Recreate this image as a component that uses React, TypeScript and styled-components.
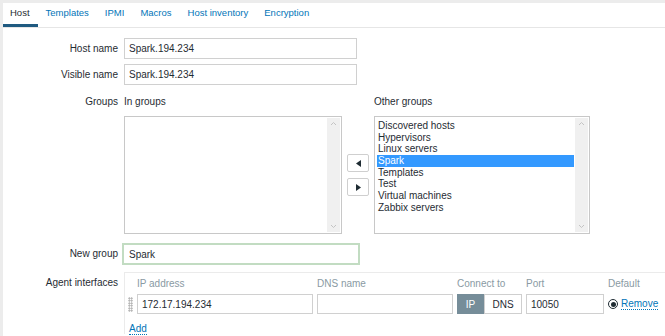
import React from "react";
import styled, { createGlobalStyle } from "styled-components";

const GlobalStyle = createGlobalStyle`
  html, body { margin: 0; padding: 0; }
  body {
    background: #ececec;
    font-family: "Liberation Sans", Arial, sans-serif;
    font-size: 10px;
    color: #1f2c33;
    overflow: hidden;
  }
`;

const Panel = styled.div`
  margin: 3px 0 0 3px;
  background: #fff;
  height: 333px;
  overflow: hidden;
`;

const TabBar = styled.div`
  display: flex;
  height: 24px;
  border-bottom: 1px solid #e6e6e6;
`;

const Tab = styled.a<{ $active?: boolean }>`
  box-sizing: border-box;
  height: 24px;
  padding: 0 8px 2px 8px;
  display: flex;
  align-items: center;
  font-size: 9.5px;
  color: ${(p) => (p.$active ? "#1f2c33" : "#0275b8")};
  border-bottom: 3px solid ${(p) => (p.$active ? "#1f5a80" : "transparent")};
  cursor: pointer;
  &:first-child {
    padding-left: 7px;
  }
`;

const Form = styled.div`
  padding-top: 10px;
  display: flex;
  flex-direction: column;
`;

const Row = styled.div<{ $mt?: number; $align?: string }>`
  display: grid;
  grid-template-columns: 115px 1fr;
  column-gap: 6px;
  align-items: ${(p) => p.$align || "center"};
  margin-top: ${(p) => p.$mt || 0}px;
`;

const Label = styled.div<{ $pt?: number }>`
  text-align: right;
  color: #1f2c33;
  padding-top: ${(p) => p.$pt || 0}px;
  line-height: 12px;
`;

const TextInput = styled.div<{ $w: number; $h?: number }>`
  box-sizing: border-box;
  width: ${(p) => p.$w}px;
  height: ${(p) => p.$h || 21}px;
  border: 1px solid #d0d0d0;
  padding: 0 4px;
  display: flex;
  align-items: center;
  background: #fff;
  white-space: nowrap;
`;

const GreenInput = styled(TextInput)`
  border: 2px solid #c2dcc2;
  margin-left: -2px;
  padding-left: 5px;
`;

const GroupsGrid = styled.div`
  display: grid;
  grid-template-columns: 218px 22px 216px;
  column-gap: 5px;
  row-gap: 8px;
  align-items: center;
`;

const ColHeader = styled.div`
  line-height: 12px;
`;

const ListBox = styled.div<{ $w: number }>`
  box-sizing: border-box;
  width: ${(p) => p.$w}px;
  height: 118px;
  border: 1px solid #c8c8c8;
  display: flex;
  background: #fff;
`;

const ListItems = styled.div`
  flex: 1;
  padding: 3px 1px 0 2px;
`;

const ListItem = styled.div<{ $sel?: boolean }>`
  line-height: 11.67px;
  height: 11.67px;
  padding-left: 1px;
  white-space: nowrap;
  background: ${(p) => (p.$sel ? "#3399ff" : "transparent")};
  color: ${(p) => (p.$sel ? "#fff" : "#1f2c33")};
`;

const ScrollTrack = styled.div`
  width: 13px;
  margin: 1px 1px 1px 0;
  background: #f0f0f0;
  display: flex;
  flex-direction: column;
  justify-content: space-between;
  align-items: center;
  padding: 3px 0;
`;

const ArrowCol = styled.div`
  display: flex;
  flex-direction: column;
  gap: 6px;
`;

const ArrowBtn = styled.div`
  box-sizing: border-box;
  width: 22px;
  height: 18px;
  border: 1px solid #cfcfcf;
  border-radius: 2px;
  background: #fff;
  display: flex;
  align-items: center;
  justify-content: center;
`;

const IfaceBox = styled.div`
  box-sizing: border-box;
  width: 560px;
  border-top: 1px solid #ebebeb;
  border-left: 1px solid #ebebeb;
  padding: 5px 0 0 3px;
  display: grid;
  grid-template-columns: 5px 176px 136px 65px 78px auto;
  column-gap: 4px;
  align-items: center;
`;

const IfHeader = styled.div`
  line-height: 12px;
  color: #8a9aa3;
  white-space: nowrap;
  margin-bottom: 4px;
`;

const Handle = styled.div`
  width: 5px;
  height: 15px;
  background-image: radial-gradient(circle, #a8a8a8 0.8px, transparent 1px);
  background-size: 2.5px 2.5px;
`;

const Toggle = styled.div`
  display: flex;
  height: 20px;
  box-sizing: border-box;
`;

const ToggleOpt = styled.div<{ $on?: boolean; $w: number }>`
  box-sizing: border-box;
  width: ${(p) => p.$w}px;
  height: 20px;
  display: flex;
  align-items: center;
  justify-content: center;
  background: ${(p) => (p.$on ? "#768d99" : "#fff")};
  color: ${(p) => (p.$on ? "#fff" : "#1f2c33")};
  border: 1px solid ${(p) => (p.$on ? "#768d99" : "#cfcfcf")};
`;

const DefaultCell = styled.div`
  display: flex;
  align-items: center;
  gap: 3px;
`;

const Radio = styled.div`
  box-sizing: border-box;
  width: 10px;
  height: 10px;
  border-radius: 50%;
  border: 1px solid #1f2c33;
  display: flex;
  align-items: center;
  justify-content: center;
  &::after {
    content: "";
    width: 5px;
    height: 5px;
    border-radius: 50%;
    background: #1f2c33;
  }
`;

const Link = styled.a`
  color: #0275b8;
  border-bottom: 1px dotted #0275b8;
  line-height: 11px;
  cursor: pointer;
`;

const AddRow = styled.div`
  grid-column: 1 / -1;
  padding: 9px 0 0 1px;
`;

const TriLeft = () => (
  <svg width="5" height="7" viewBox="0 0 5 7"><path d="M5 0 L0 3.5 L5 7 Z" fill="#1f2c33" /></svg>
);
const TriRight = () => (
  <svg width="5" height="7" viewBox="0 0 5 7"><path d="M0 0 L5 3.5 L0 7 Z" fill="#1f2c33" /></svg>
);
const Chev = ({ up }: { up?: boolean }) => (
  <svg width="7" height="5" viewBox="0 0 7 5">
    <path d={up ? "M1 4 L3.5 1.5 L6 4" : "M1 1 L3.5 3.5 L6 1"} fill="none" stroke="#c4c4c4" strokeWidth="1" />
  </svg>
);

const Scrollbar = () => (
  <ScrollTrack>
    <Chev up />
    <Chev />
  </ScrollTrack>
);

const otherGroups = [
  "Discovered hosts",
  "Hypervisors",
  "Linux servers",
  "Spark",
  "Templates",
  "Test",
  "Virtual machines",
  "Zabbix servers",
];

export default function App() {
  return (
    <>
      <GlobalStyle />
      <Panel>
        <TabBar>
          <Tab $active>Host</Tab>
          <Tab>Templates</Tab>
          <Tab>IPMI</Tab>
          <Tab>Macros</Tab>
          <Tab>Host inventory</Tab>
          <Tab>Encryption</Tab>
        </TabBar>
        <Form>
          <Row>
            <Label>Host name</Label>
            <TextInput $w={233}>Spark.194.234</TextInput>
          </Row>
          <Row $mt={5}>
            <Label>Visible name</Label>
            <TextInput $w={233}>Spark.194.234</TextInput>
          </Row>
          <Row $mt={11} $align="start">
            <Label>Groups</Label>
            <GroupsGrid>
              <ColHeader>In groups</ColHeader>
              <div />
              <ColHeader>Other groups</ColHeader>
              <ListBox $w={218}>
                <ListItems />
                <Scrollbar />
              </ListBox>
              <ArrowCol>
                <ArrowBtn><TriLeft /></ArrowBtn>
                <ArrowBtn><TriRight /></ArrowBtn>
              </ArrowCol>
              <ListBox $w={216}>
                <ListItems>
                  {otherGroups.map((g) => (
                    <ListItem key={g} $sel={g === "Spark"}>{g}</ListItem>
                  ))}
                </ListItems>
                <Scrollbar />
              </ListBox>
            </GroupsGrid>
          </Row>
          <Row $mt={9}>
            <Label>New group</Label>
            <GreenInput $w={238} $h={22}>Spark</GreenInput>
          </Row>
          <Row $mt={7} $align="start">
            <Label $pt={5}>Agent interfaces</Label>
            <IfaceBox>
              <div />
              <IfHeader>IP address</IfHeader>
              <IfHeader>DNS name</IfHeader>
              <IfHeader>Connect to</IfHeader>
              <IfHeader>Port</IfHeader>
              <IfHeader>Default</IfHeader>
              <Handle />
              <TextInput $w={176} $h={20}>172.17.194.234</TextInput>
              <TextInput $w={136} $h={20} />
              <Toggle>
                <ToggleOpt $on $w={27}>IP</ToggleOpt>
                <ToggleOpt $w={38}>DNS</ToggleOpt>
              </Toggle>
              <TextInput $w={78} $h={20}>10050</TextInput>
              <DefaultCell>
                <Radio />
                <Link>Remove</Link>
              </DefaultCell>
              <AddRow>
                <Link>Add</Link>
              </AddRow>
            </IfaceBox>
          </Row>
        </Form>
      </Panel>
    </>
  );
}
